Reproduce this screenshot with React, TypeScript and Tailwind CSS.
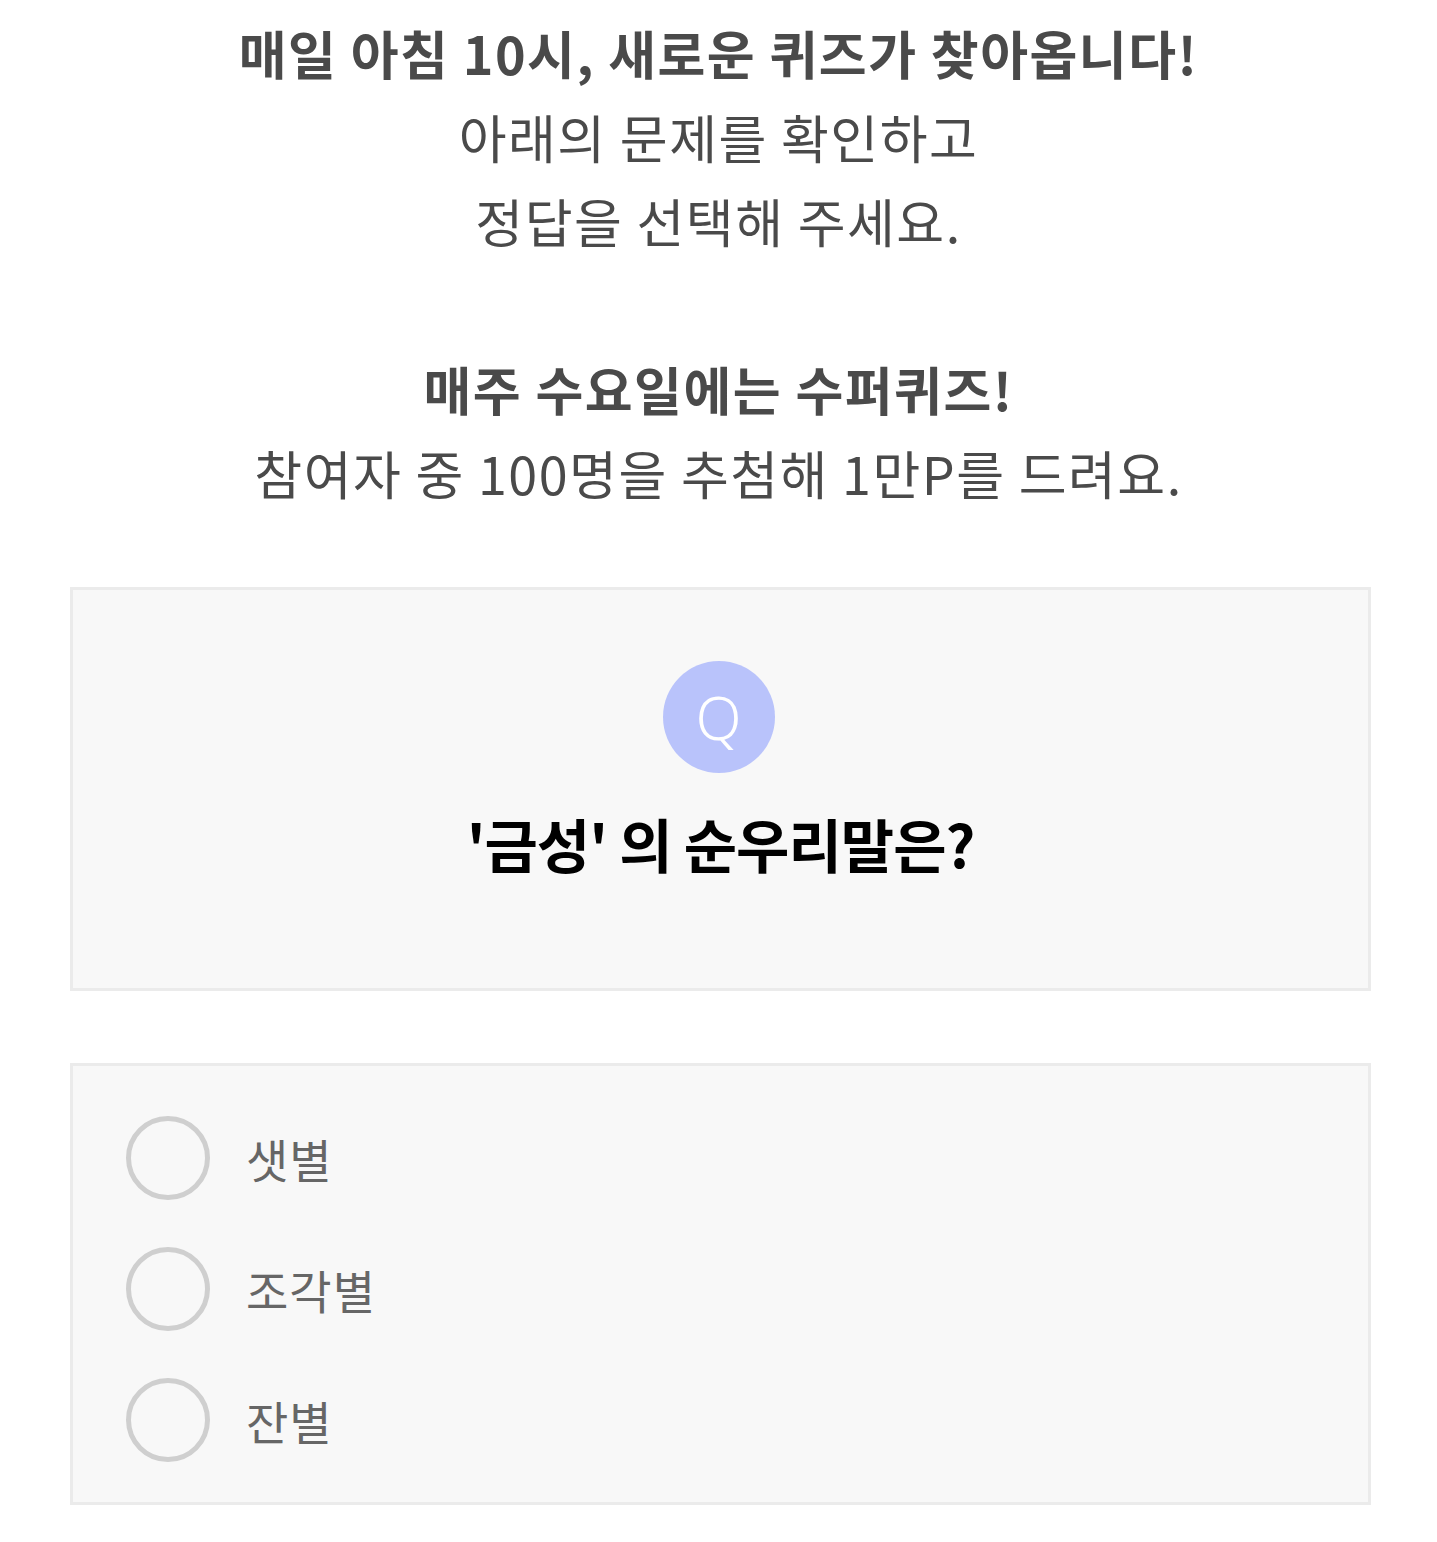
const font = { fontFamily: '"Noto Sans CJK KR", "Noto Sans", sans-serif' };

const options = ["샛별", "조각별", "잔별"];

export default function App() {
  return (
    <div className="bg-white min-h-[1542px] pt-[11px]" style={font}>
      <div className="text-center text-[52px] leading-[84px] text-[#4a4a4a] tracking-[1.5px]">
        <p>
          <b className="font-bold">매일 아침 10시, 새로운 퀴즈가 찾아옵니다!</b>
          <br />
          아래의 문제를 확인하고
          <br />
          정답을 선택해 주세요.
          <br />
          <br />
          <b className="font-bold">매주 수요일에는 수퍼퀴즈!</b>
          <br />
          참여자 중 100명을 추첨해 1만P를 드려요.
        </p>
      </div>

      <div className="ml-[70px] mr-[66px] mt-[72px] h-[404px] border-[3px] border-[#ebebeb] bg-[#f8f8f8] flex flex-col items-center pt-[71px]">
        <div className="w-[112px] h-[112px] rounded-full bg-[#b9c3fb] flex items-center justify-center -translate-x-[2px]">
          <span className="text-white text-[60px] font-light leading-none" style={{ fontFamily: '"Noto Sans", sans-serif' }}>
            Q
          </span>
        </div>
        <p className="mt-[38px] text-[58px] leading-[64px] font-bold text-black tracking-[-1px]">
          '금성' 의 순우리말은?
        </p>
      </div>

      <div className="ml-[70px] mr-[66px] mt-[72px] h-[442px] border-[3px] border-[#ebebeb] bg-[#f8f8f8] pl-[53px] pt-[50px] flex flex-col gap-[47px]">
        {options.map((o) => (
          <label key={o} className="flex items-center gap-[36px] h-[84px]">
            <span className="w-[84px] h-[84px] rounded-full border-[5px] border-[#cfcfcf] shrink-0" />
            <span className="text-[46px] text-[#666] leading-none tracking-[1px]">{o}</span>
          </label>
        ))}
      </div>
    </div>
  );
}
